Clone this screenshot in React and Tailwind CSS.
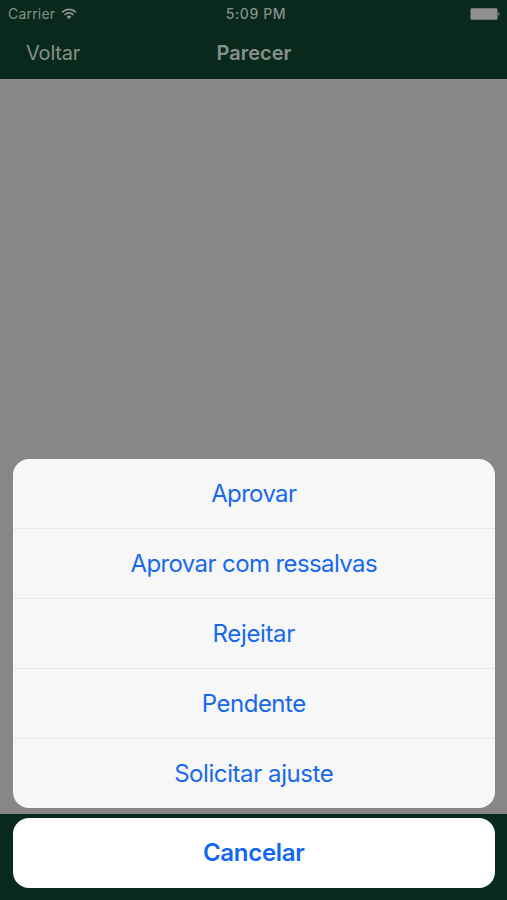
import { useState } from "react";

const actions = [
  { label: "Aprovar", spacing: "tracking-[-0.65px]" },
  { label: "Aprovar com ressalvas", spacing: "tracking-[-0.6px]" },
  { label: "Rejeitar", spacing: "tracking-[-0.35px]" },
  { label: "Pendente", spacing: "tracking-[-0.5px]" },
  { label: "Solicitar ajuste", spacing: "tracking-[-0.42px]" },
];

function WifiIcon() {
  return (
    <svg width="16" height="12" viewBox="0 0 16 12" fill="none" stroke="#8a938e" strokeWidth="1.7">
      <path d="M1.1 4.3a9.8 9.8 0 0 1 13.8 0" />
      <path d="M3.6 6.8a6.2 6.2 0 0 1 8.8 0" />
      <path d="M8 11.2 5.6 8.7a3.4 3.4 0 0 1 4.8 0Z" fill="#8a938e" stroke="none" />
    </svg>
  );
}

function BatteryIcon() {
  return (
    <svg width="30" height="12" viewBox="0 0 30 12" fill="#8f8f8f">
      <rect x="0.5" y="0.3" width="27" height="11.4" rx="1.2" />
      <path d="M28.2 4.2c1.8.5 1.8 3.1 0 3.6Z" />
    </svg>
  );
}

export default function App() {
  const [selected, setSelected] = useState(null);

  return (
    <div className="relative flex h-[900px] w-[507px] flex-col overflow-hidden bg-[#878787] font-['Inter',sans-serif]">
      {/* Barra de status e navegação */}
      <header className="h-[79px] shrink-0 bg-[#08291c] text-[#87908b]">
        <div className="grid h-[27px] grid-cols-3 items-center pr-[7px] pl-2">
          <div className="flex items-center gap-1.5">
            <span className="text-[14px] tracking-[0.2px]">Carrier</span>
            <WifiIcon />
          </div>
          <span className="pl-1 text-center text-[14px] font-medium tracking-[0.6px]">5:09 PM</span>
          <div className="flex justify-end">
            <BatteryIcon />
          </div>
        </div>
        <div className="grid h-[51px] grid-cols-3 items-center">
          <button className="pl-[26px] text-left text-[20px] tracking-[-0.2px]">Voltar</button>
          <h1 className="pl-px text-center text-[20px] font-semibold">Parecer</h1>
        </div>
      </header>

      <main className="grow" />

      <footer className="h-[86px] shrink-0 bg-[#08291c]" />

      {/* Menu de ações */}
      <div className="absolute right-[12.5px] bottom-3 left-[13px] flex flex-col gap-2.5">
        <div className="flex h-[349px] flex-col divide-y divide-[#e8e9ea] overflow-hidden rounded-[16px] bg-[#f7f7f7]">
          {actions.map((action) => (
            <button
              key={action.label}
              onClick={() => setSelected(action.label)}
              aria-pressed={selected === action.label}
              className={`h-[70px] shrink-0 text-[24px] text-[#1769ec] ${action.spacing}`}
            >
              {action.label}
            </button>
          ))}
        </div>
        <button className="h-[70px] rounded-[16px] bg-white text-[24px] font-semibold tracking-[-0.3px] text-[#1167f0]">
          Cancelar
        </button>
      </div>
    </div>
  );
}
